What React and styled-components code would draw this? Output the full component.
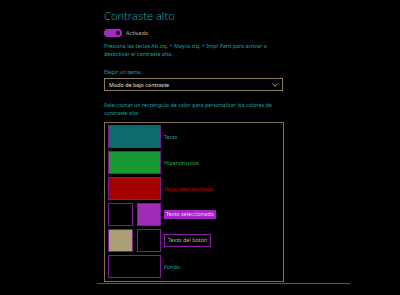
import React from "react";
import styled, { createGlobalStyle } from "styled-components";

const GlobalStyle = createGlobalStyle`
    html, body {
        margin:0;
        padding:0;
        background:#000;
    }
    body {
        font-family:"Noto Sans", "Open Sans", sans-serif;
        color:#1fa3a3;
    }
`

const Page = styled.div`
    width:400px;
    height:295px;
    background:#000;
    overflow:hidden;
    display:flex;
    flex-direction:column;
`

const Column = styled.div`
    width:180px;
    margin:0 0 0 104px;
    padding:8px 0 0 0;
    display:flex;
    flex-direction:column;
`

const Title = styled.h1`
    margin:0;
    font-size:11.1px;
    font-weight:300;
    line-height:16px;
    color:#1b9c9c;
`

const ToggleRow = styled.div`
    display:flex;
    align-items:center;
    gap:4px;
    margin:4px 0 0 0;
    height:9px;
`

const Toggle = styled.div`
    width:18px;
    height:8px;
    border-radius:4px;
    background:#a22cc0;
    display:flex;
    align-items:center;
    justify-content:flex-end;
    padding:0 2px;
    box-sizing:border-box;
`

const Knob = styled.div`
    width:4px;
    height:4px;
    border-radius:50%;
    background:#000;
`

const ToggleLabel = styled.span`
    font-size:5.5px;
    color:#c8b888;
`

const Text = styled.p`
    margin:${(p) => p.$top || 0}px 0 0 0;
    font-size:5.35px;
    line-height:8px;
    color:${(p) => p.$color || "#1fa3a3"};
`

const Select = styled.div`
    margin:2px 0 0 0;
    width:179px;
    height:13px;
    box-sizing:border-box;
    border:1px solid #8a7e58;
    display:flex;
    align-items:center;
    justify-content:space-between;
    padding:0 4px 0 4px;
    font-size:5.4px;
    color:#e6e2d6;
`

const Panel = styled.div`
    margin:5px 0 0 0;
    width:180px;
    height:160px;
    box-sizing:border-box;
    border:1px solid #7d7152;
    padding:2px 3px;
    display:flex;
    flex-direction:column;
    gap:3px;
`

const Row = styled.div`
    display:flex;
    align-items:center;
    height:23px;
`

const Swatches = styled.div`
    width:53px;
    display:flex;
    gap:4px;
    margin:0 3px 0 0;
`

const Swatch = styled.div`
    flex:1;
    height:23px;
    box-sizing:border-box;
    border:1px solid #7c1b94;
    background:${(p) => p.$color || "#000"};
`

const Label = styled.span`
    font-size:5.4px;
    color:${(p) => p.$color};
`

const SelectedLabel = styled.span`
    font-size:5.4px;
    color:#e8d8f0;
    background:#a524c4;
    padding:1px 2px;
    line-height:7px;
`

const ButtonLabel = styled.span`
    font-size:5.4px;
    color:#c8b888;
    border:1px solid #8a1fa6;
    padding:2px 3px;
    line-height:7px;
`

const BottomLine = styled.div`
    margin:1px 0 0 97px;
    width:253px;
    height:1px;
    background:#5e584a;
`

function Chevron() {
    return (
        <svg width="6" height="4" viewBox="0 0 6 4">
            <path d="M0.5 0.8 L3 3.2 L5.5 0.8" fill="none" stroke="#d8d4c8" strokeWidth="0.8" />
        </svg>
    )
}

export default function App() {
    return (
        <Page>
            <GlobalStyle />
            <Column>
                <Title>Contraste alto</Title>
                <ToggleRow>
                    <Toggle><Knob /></Toggle>
                    <ToggleLabel>Activado</ToggleLabel>
                </ToggleRow>
                <Text $top={5}>
                    Presiona las teclas Alt izq. + Mayús izq. + Impr Pant para activar o desactivar el contraste alto.
                </Text>
                <Text $top={10}>Elegir un tema</Text>
                <Select>
                    <span>Modo de bajo contraste</span>
                    <Chevron />
                </Select>
                <Text $top={10}>
                    Seleccionar un rectángulo de color para personalizar los colores de contraste alto
                </Text>
                <Panel>
                    <Row>
                        <Swatches><Swatch $color="#0e6c6c" /></Swatches>
                        <Label $color="#1fa3a3">Texto</Label>
                    </Row>
                    <Row>
                        <Swatches><Swatch $color="#179a32" /></Swatches>
                        <Label $color="#2bb043">Hipervínculos</Label>
                    </Row>
                    <Row>
                        <Swatches><Swatch $color="#a40000" /></Swatches>
                        <Label $color="#c40000">Texto deshabilitado</Label>
                    </Row>
                    <Row>
                        <Swatches>
                            <Swatch />
                            <Swatch $color="#9e2cb6" />
                        </Swatches>
                        <SelectedLabel>Texto seleccionado</SelectedLabel>
                    </Row>
                    <Row>
                        <Swatches>
                            <Swatch $color="#ab9f74" />
                            <Swatch />
                        </Swatches>
                        <ButtonLabel>Texto del botón</ButtonLabel>
                    </Row>
                    <Row>
                        <Swatches><Swatch /></Swatches>
                        <Label $color="#1fa3a3">Fondo</Label>
                    </Row>
                </Panel>
            </Column>
            <BottomLine />
        </Page>
    )
}
